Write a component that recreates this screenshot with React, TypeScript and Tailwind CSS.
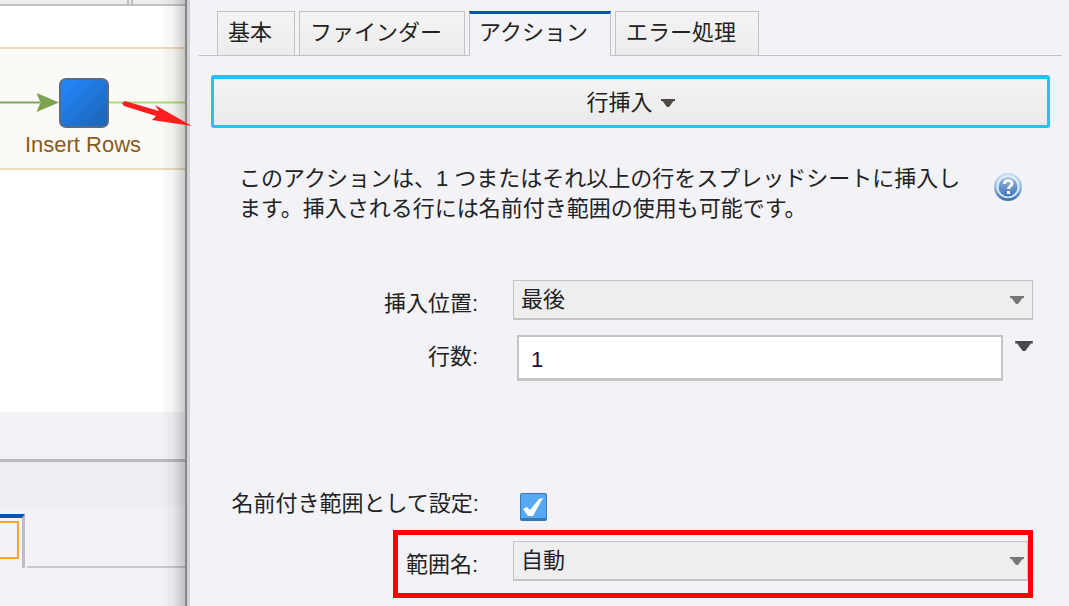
import { useState } from "react";

const tabs = ["基本", "ファインダー", "アクション", "エラー処理"];

function Caret({ className }: { className: string }) {
    return (
        <svg viewBox="0 0 14 8" className={className} fill="currentColor" aria-hidden="true">
            <path d="M0 0h14v2h-1.5L8 8H6L1.5 2H0z" />
        </svg>
    );
}

function Select({ id, option, caret = "right-[9px]" }: { id: string; option: string; caret?: string }) {
    return (
        <div className="relative flex-1">
            <select
                id={id}
                className="block w-full h-10 appearance-none border border-b-2 border-[#c3c3c3] bg-[#eeeeee] pl-[7px] pr-8 text-[#222222] outline-none"
            >
                <option>{option}</option>
            </select>
            <Caret className={`absolute top-4 w-[14px] h-2 text-[#777777] pointer-events-none ${caret}`} />
        </div>
    );
}

function HelpIcon() {
    return (
        <svg viewBox="0 0 28 28" className="w-7 h-7" aria-hidden="true">
            <defs>
                <linearGradient id="ring" x1="0" y1="0" x2="0" y2="1">
                    <stop offset="0" stopColor="#c4e0fa" />
                    <stop offset="0.55" stopColor="#94b8de" />
                    <stop offset="1" stopColor="#3a6aa8" />
                </linearGradient>
                <linearGradient id="disc" x1="0" y1="0" x2="0" y2="1">
                    <stop offset="0" stopColor="#8fb0d6" />
                    <stop offset="1" stopColor="#4279bb" />
                </linearGradient>
            </defs>
            <circle cx="14" cy="14" r="14" fill="url(#ring)" />
            <circle cx="14" cy="13.5" r="11.5" fill="#dcecfa" />
            <circle cx="14" cy="14" r="9.5" fill="url(#disc)" />
            <path
                d="M10.5 11c0-4.5 7.5-4.5 7.5-.5 0 2.7-3.5 2.5-3.5 5.5"
                fill="none"
                stroke="#ffffff"
                strokeWidth="3"
            />
            <rect x="13" y="18" width="3" height="3" fill="#ffffff" />
        </svg>
    );
}

function Workflow() {
    return (
        <div className="relative w-[185px] shrink-0 flex flex-col overflow-hidden bg-[#f3f2f7]">
            <div className="h-[6px] flex border-b-2 border-[#c2c2c2] bg-[#eeeeee]">
                <div className="w-[133px] border-r-[6px] border-double border-[#bbbbbb]" />
            </div>
            <div className="h-[406px] bg-white pt-[41px]">
                <div className="relative h-[123px] border-y-2 border-[#ecdcb8] bg-[#fcfaf6]">
                    <svg viewBox="0 0 185 119" className="absolute left-0 top-0 w-[185px] h-[119px]" aria-hidden="true">
                        <defs>
                            <linearGradient id="node" x1="0" y1="0" x2="1" y2="1">
                                <stop offset="0" stopColor="#2389ff" />
                                <stop offset="1" stopColor="#1c62b4" />
                            </linearGradient>
                        </defs>
                        <path d="M0 53.5H40" stroke="#7da55c" strokeWidth="2" />
                        <path d="M36.5 44 59 53.5 36.5 63l4-9.5z" fill="#7da351" />
                        <path d="M108 53.5H185" stroke="#a8e070" strokeWidth="2" />
                        <rect
                            x="60"
                            y="30"
                            width="48"
                            height="48"
                            rx="6"
                            fill="url(#node)"
                            stroke="#5d6b82"
                            strokeWidth="2"
                        />
                    </svg>
                    <div className="pt-[82px] pr-[19px] text-center leading-7 text-[#8a5a1c]">Insert Rows</div>
                </div>
            </div>
            <div className="h-[50px] border-b-[3px] border-[#bababa]" />
            <div className="h-[45px] bg-[#eeedf2]" />
            <div className="h-[61px] flex items-end">
                <div className="w-[25px] h-[54px] border-t-4 border-r-[3px] border-t-[#0c55b5] border-r-[#bebebe] pt-[3px] pr-[3px]">
                    <div className="h-[38px] border-2 border-l-0 border-[#ffa827]" />
                </div>
                <div className="flex-1 ml-[2px] border-b-2 border-[#c8c8c8]" />
            </div>
            <div className="absolute inset-y-0 right-0 w-6 bg-linear-to-r from-transparent via-black/5 to-black/20" />
        </div>
    );
}

function App() {
    const [active, setActive] = useState("アクション");

    return (
        <div className="relative min-h-screen flex bg-[#f3f2f7] text-[22px] text-[#222222] font-['Liberation_Sans','Noto_Sans_CJK_JP',sans-serif]">
            <Workflow />
            <div className="flex-1 min-w-0 border-l-2 border-[#878787]">
                <div className="min-h-full border-l-[3px] border-[#d2d2d6] pl-[9px] pr-[7px] pt-[11px]">
                    <div role="tablist" className="flex gap-1 border-b border-[#c0c0c0] pl-[18px]">
                        {tabs.map((tab) => (
                            <button
                                key={tab}
                                role="tab"
                                aria-selected={tab === active}
                                onClick={() => setActive(tab)}
                                className={
                                    tab === active
                                        ? "h-[45px] -mb-px border-x border-t-[3px] border-x-[#c3c3c3] border-t-[#0a54b5] bg-[#f3f2f7] pl-[9px] pr-[22px] pb-1 leading-9 whitespace-nowrap"
                                        : "h-11 border border-b-0 border-[#c3c3c3] bg-linear-to-b from-[#f4f4f4] to-[#ececec] pl-[10px] pr-[22px] pb-[2px] leading-9 whitespace-nowrap"
                                }
                            >
                                {tab}
                            </button>
                        ))}
                    </div>

                    <div className="px-3 pt-[19px]">
                        <button className="w-full h-[53px] flex items-center justify-center gap-2 rounded-[3px] border-[3px] border-t-4 border-[#26c0f6] bg-linear-to-b from-[#f4f4f4] to-[#eaeaea]">
                            行挿入
                            <Caret className="mt-[2px] w-[14px] h-2 text-[#4c4a42]" />
                        </button>
                    </div>

                    <div className="flex items-start px-10 pt-9">
                        <p className="flex-1 leading-[30px]">
                            このアクションは、1 つまたはそれ以上の行をスプレッドシートに挿入し
                            <br />
                            ます。挿入される行には名前付き範囲の使用も可能です。
                        </p>
                        <button aria-label="ヘルプ" className="mt-[9px]">
                            <HelpIcon />
                        </button>
                    </div>

                    <div className="pr-[29px] pt-14">
                        <div className="flex">
                            <label htmlFor="position" className="w-[279px] mr-[35px] pt-1 text-right leading-10">
                                挿入位置:
                            </label>
                            <Select id="position" option="最後" />
                        </div>
                        <div className="flex pt-[11px]">
                            <label htmlFor="rows" className="w-[279px] mr-[39px] pt-[2px] text-right leading-10">
                                行数:
                            </label>
                            <input
                                id="rows"
                                defaultValue="1"
                                className="flex-1 min-w-0 h-[46px] border-2 border-b-[3px] border-[#c4c4c4] bg-white pl-3 pt-1 text-[#15103c] outline-none"
                            />
                            <button aria-label="行数の選択" className="ml-3 mt-[6px] self-start">
                                <Caret className="w-[18px] h-[10px] text-[#4a4a4a]" />
                            </button>
                        </div>
                        <div className="flex pt-[101px]">
                            <label htmlFor="named" className="w-[280px] mr-[41px] pt-[2px] text-right leading-10">
                                名前付き範囲として設定:
                            </label>
                            <span className="relative mt-[11px] w-[27px] h-7">
                                <input
                                    id="named"
                                    type="checkbox"
                                    defaultChecked
                                    className="peer block w-full h-full appearance-none rounded-[2px] border border-b-[3px] border-[#3878b4] bg-[#56a8f2]"
                                />
                                <svg
                                    viewBox="0 0 27 28"
                                    className="absolute inset-0 w-full h-full pointer-events-none opacity-0 peer-checked:opacity-100"
                                    aria-hidden="true"
                                >
                                    <path d="M3 16l4-2 3 3L19 6l4-1-10 18H8z" fill="#ffffff" />
                                </svg>
                            </span>
                        </div>
                    </div>

                    <div className="mt-[6px] ml-[194px] mr-[29px] flex border-[5px] border-[#fe0000] pt-[6px] pb-2">
                        <label htmlFor="range" className="w-[80px] mr-[35px] pt-1 text-right leading-10">
                            範囲名:
                        </label>
                        <Select id="range" option="自動" caret="right-1" />
                    </div>
                </div>
            </div>

            <svg viewBox="0 0 72 28" className="absolute left-[121px] top-[100px] w-[72px] h-7" aria-hidden="true">
                <path d="M1 3 4 1 38 11 34 5 71 26 31 20 35 16 3 6z" fill="#ff1e1e" />
            </svg>
        </div>
    );
}

export default App;
